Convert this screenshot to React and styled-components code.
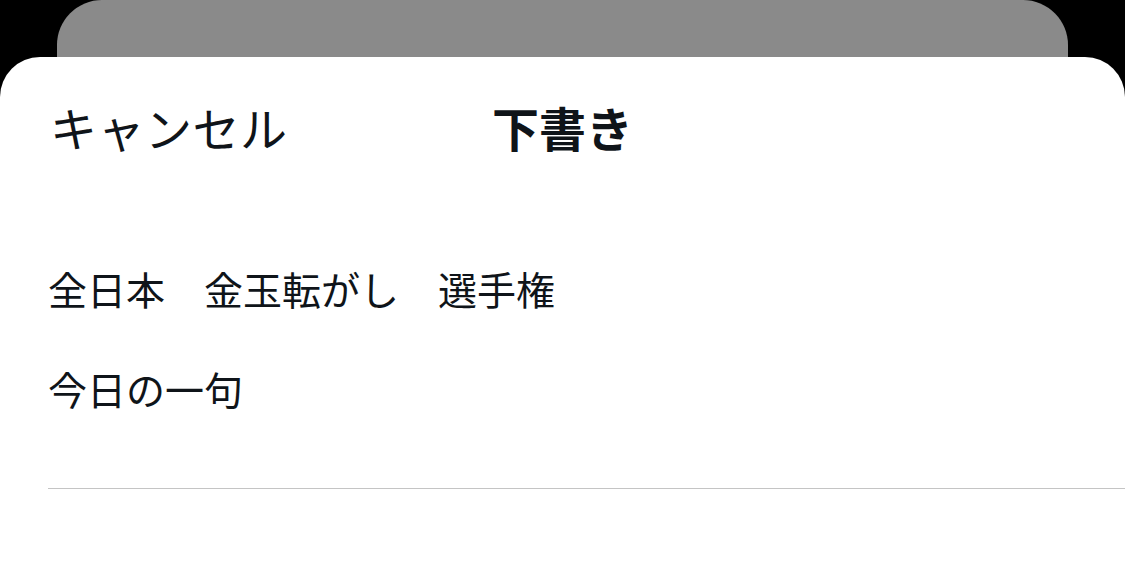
import React from "react";
import styled, { createGlobalStyle } from "styled-components";

const GlobalStyle = createGlobalStyle`
  html, body {
    margin: 0;
    padding: 0;
    background: #000;
    height: 100%;
  }
  #root {
    height: 100%;
  }
  * {
    box-sizing: border-box;
  }
`;

const Screen = styled.div`
  height: 561px;
  display: flex;
  flex-direction: column;
  background: #000;
  overflow: hidden;
  font-family: "Noto Sans CJK JP", "Noto Sans", sans-serif;
  color: #0f1419;
`;

const BackCard = styled.div`
  height: 57px;
  flex-shrink: 0;
  margin: 0 57px;
  background: #8a8a8a;
  border-radius: 45px 45px 0 0;
`;

const Sheet = styled.div`
  flex: 1;
  display: flex;
  flex-direction: column;
  background: #fff;
  border-radius: 40px 40px 0 0;
`;

const Header = styled.div`
  height: 146px;
  padding-bottom: 8px;
  display: grid;
  grid-template-columns: 1fr auto 1fr;
  align-items: center;
`;

const Cancel = styled.button`
  justify-self: start;
  padding: 0 0 0 50px;
  border: none;
  background: none;
  font-family: inherit;
  font-size: 47px;
  font-weight: 400;
  letter-spacing: 0.5px;
  color: inherit;
  cursor: pointer;
`;

const Title = styled.h1`
  margin: 0;
  font-size: 47px;
  font-weight: 700;
  letter-spacing: 0;
`;

const List = styled.div`
  display: flex;
  flex-direction: column;
  padding-top: 35px;
`;

const Draft = styled.div`
  height: 100px;
  display: flex;
  align-items: center;
  padding-left: 48px;
  font-size: 39px;
  white-space: pre;
`;

const Divider = styled.hr`
  margin: 50px 0 0 48px;
  border: none;
  border-top: 1.5px solid #c4c4c4;
`;

const drafts = [
  { id: 1, text: "全日本　金玉転がし　選手権" },
  { id: 2, text: "今日の一句" },
];

export default function App() {
  return (
    <>
      <GlobalStyle />
      <Screen>
        <BackCard />
        <Sheet>
          <Header>
            <Cancel>キャンセル</Cancel>
            <Title>下書き</Title>
            <div />
          </Header>
          <List>
            {drafts.map((d) => (
              <Draft key={d.id}>{d.text}</Draft>
            ))}
          </List>
          <Divider />
        </Sheet>
      </Screen>
    </>
  );
}
